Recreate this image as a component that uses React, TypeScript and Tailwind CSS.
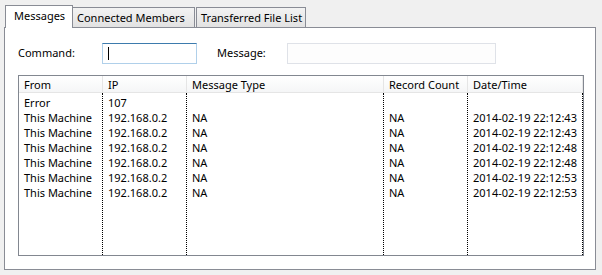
import React from "react";

const font = { fontFamily: '"Noto Sans", "Open Sans", sans-serif' };

interface Row {
    from: string;
    ip: string;
    type: string;
    count: string;
    time: string;
}

const rows: Row[] = [
    { from: "Error", ip: "107", type: "", count: "", time: "" },
    { from: "This Machine", ip: "192.168.0.2", type: "NA", count: "NA", time: "2014-02-19 22:12:43" },
    { from: "This Machine", ip: "192.168.0.2", type: "NA", count: "NA", time: "2014-02-19 22:12:43" },
    { from: "This Machine", ip: "192.168.0.2", type: "NA", count: "NA", time: "2014-02-19 22:12:48" },
    { from: "This Machine", ip: "192.168.0.2", type: "NA", count: "NA", time: "2014-02-19 22:12:48" },
    { from: "This Machine", ip: "192.168.0.2", type: "NA", count: "NA", time: "2014-02-19 22:12:53" },
    { from: "This Machine", ip: "192.168.0.2", type: "NA", count: "NA", time: "2014-02-19 22:12:53" },
];

const columns: { title: string; key: keyof Row; width: string }[] = [
    { title: "From", key: "from", width: "w-[84px]" },
    { title: "IP", key: "ip", width: "w-[84px]" },
    { title: "Message Type", key: "type", width: "w-[197px]" },
    { title: "Record Count", key: "count", width: "w-[84px]" },
    { title: "Date/Time", key: "time", width: "w-[115px]" },
];

export default function App() {
    return (
        <div className="w-[602px] h-[275px] bg-[#f0f0f0] pt-[5px] pl-[4px] text-[11px] text-black" style={font}>
            {/* tabs */}
            <div className="relative z-10 flex items-end h-[23px] -mb-px">
                <div className="h-[23px] w-[68px] ml-px border border-b-0 border-[#898c95] bg-white pl-[8px] leading-[20px]">
                    Messages
                </div>
                <div className="h-[20px] w-[122px] mb-px border border-l-0 border-b-0 border-[#898c95] bg-linear-to-b from-[#f3f3f3] to-[#e2e2e2] pl-[4px] leading-[19px]">
                    Connected Members
                </div>
                <div className="h-[20px] w-[110px] mb-px ml-px border border-b-0 border-[#898c95] bg-linear-to-b from-[#f3f3f3] to-[#e2e2e2] pl-[4px] leading-[19px]">
                    Transferred File List
                </div>
            </div>

            {/* panel */}
            <div className="w-[592px] h-[243px] border border-[#898c95] bg-white">
                <div className="flex items-center h-[21px] mt-[15px] ml-[13px]">
                    <div className="w-[84px]">Command:</div>
                    <div className="w-[95px] h-[21px] border border-[#b0d0ea] border-t-[#3d7bad] bg-white flex items-center pl-[5px]">
                        <div className="w-px h-[13px] bg-black" />
                    </div>
                    <div className="w-[70px] ml-[20px]">Message:</div>
                    <div className="w-[209px] h-[21px] border border-[#dfe2e8] bg-[#fdfdfd]" />
                </div>

                {/* list view */}
                <div className="mt-[11px] ml-[13px] w-[566px] h-[181px] border border-[#828790] bg-white flex flex-col">
                    <div className="flex h-[17px] border-b border-[#e5e5e5] bg-linear-to-b from-white to-[#f5f6f7]">
                        {columns.map((c) => (
                            <div key={c.key} className={`${c.width} border-r border-[#e5e5e5] pl-[5px] leading-[17px]`}>
                                {c.title}
                            </div>
                        ))}
                    </div>
                    <div className="flex flex-1">
                        {columns.map((c) => (
                            <div key={c.key} className={`${c.width} border-r border-dotted border-black pt-[2px]`}>
                                {rows.map((r, i) => (
                                    <div key={i} className="h-[15px] pl-[5px] leading-[15px] whitespace-nowrap">
                                        {r[c.key]}
                                    </div>
                                ))}
                            </div>
                        ))}
                    </div>
                </div>
            </div>
        </div>
    );
}
